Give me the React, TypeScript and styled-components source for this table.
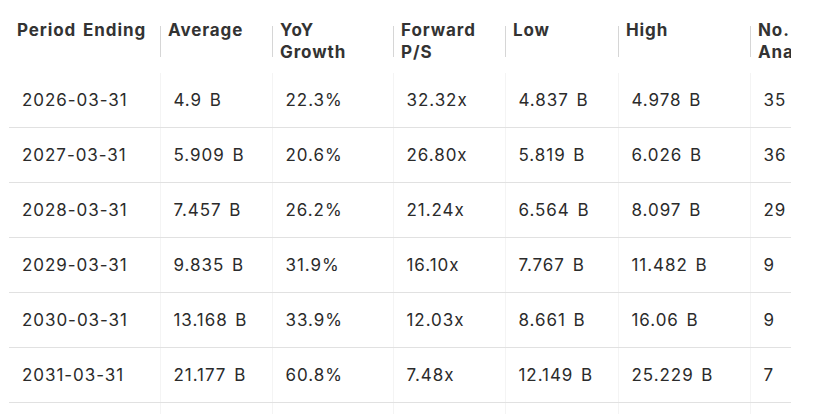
import React from 'react';
import styled, { createGlobalStyle } from 'styled-components';

const GlobalStyle = createGlobalStyle`
  html, body {
    margin: 0;
    padding: 0;
    background: #ffffff;
    overflow: hidden;
  }
  body {
    font-family: Inter, "Liberation Sans", sans-serif;
  }
`;

const Page = styled.div`
  padding-left: 9px;
  width: 782px;
  height: 414px;
  overflow: hidden;
`;

const ScrollBox = styled.div`
  width: 782px;
  overflow: hidden;
`;

const Table = styled.table`
  border-collapse: collapse;
  table-layout: fixed;
  width: 831px;
  color: #2b2b2b;
`;

const HeadCell = styled.th<{ $sep?: boolean }>`
  position: relative;
  text-align: left;
  vertical-align: top;
  padding: 19px 8px 10px;
  height: 44px;
  font-size: 17px;
  line-height: 22px;
  font-weight: 700;
  letter-spacing: 0.9px;
  word-spacing: 2px;
  color: #333333;

  &::before {
    content: '';
    display: ${(p) => (p.$sep ? 'block' : 'none')};
    position: absolute;
    left: 0;
    top: 26px;
    height: 31px;
    width: 1px;
    background: #d6d6d6;
  }
`;

const Cell = styled.td<{ $first?: boolean }>`
  height: 54px;
  padding: 0 13px;
  font-size: 17px;
  letter-spacing: 0.95px;
  word-spacing: 2px;
  border-bottom: 1px solid #e1e1e1;
  border-left: ${(p) => (p.$first ? 'none' : '1px solid #f4f4f4')};
  white-space: nowrap;
`;

const widths = [151, 112, 121, 112, 113, 132, 90];

const headers = ['Period Ending', 'Average', 'YoY Growth', 'Forward P/S', 'Low', 'High', 'No. Analysts'];

const rows = [
  ['2026-03-31', '4.9 B', '22.3%', '32.32x', '4.837 B', '4.978 B', '35'],
  ['2027-03-31', '5.909 B', '20.6%', '26.80x', '5.819 B', '6.026 B', '36'],
  ['2028-03-31', '7.457 B', '26.2%', '21.24x', '6.564 B', '8.097 B', '29'],
  ['2029-03-31', '9.835 B', '31.9%', '16.10x', '7.767 B', '11.482 B', '9'],
  ['2030-03-31', '13.168 B', '33.9%', '12.03x', '8.661 B', '16.06 B', '9'],
  ['2031-03-31', '21.177 B', '60.8%', '7.48x', '12.149 B', '25.229 B', '7'],
];

const App: React.FC = () => {
  return (
    <Page>
      <GlobalStyle />
      <ScrollBox>
        <Table>
          <colgroup>
            {widths.map((w, i) => (
              <col key={i} style={{ width: w }} />
            ))}
          </colgroup>
          <thead>
            <tr>
              {headers.map((h, i) => (
                <HeadCell key={h} $sep={i > 0}>
                  {h}
                </HeadCell>
              ))}
            </tr>
          </thead>
          <tbody>
            {rows.map((r) => (
              <tr key={r[0]}>
                {r.map((v, i) => (
                  <Cell key={i} $first={i === 0}>
                    {v}
                  </Cell>
                ))}
              </tr>
            ))}
            <tr>
              {widths.map((_, i) => (
                <Cell key={i} $first={i === 0} />
              ))}
            </tr>
          </tbody>
        </Table>
      </ScrollBox>
    </Page>
  );
};

export default App;
